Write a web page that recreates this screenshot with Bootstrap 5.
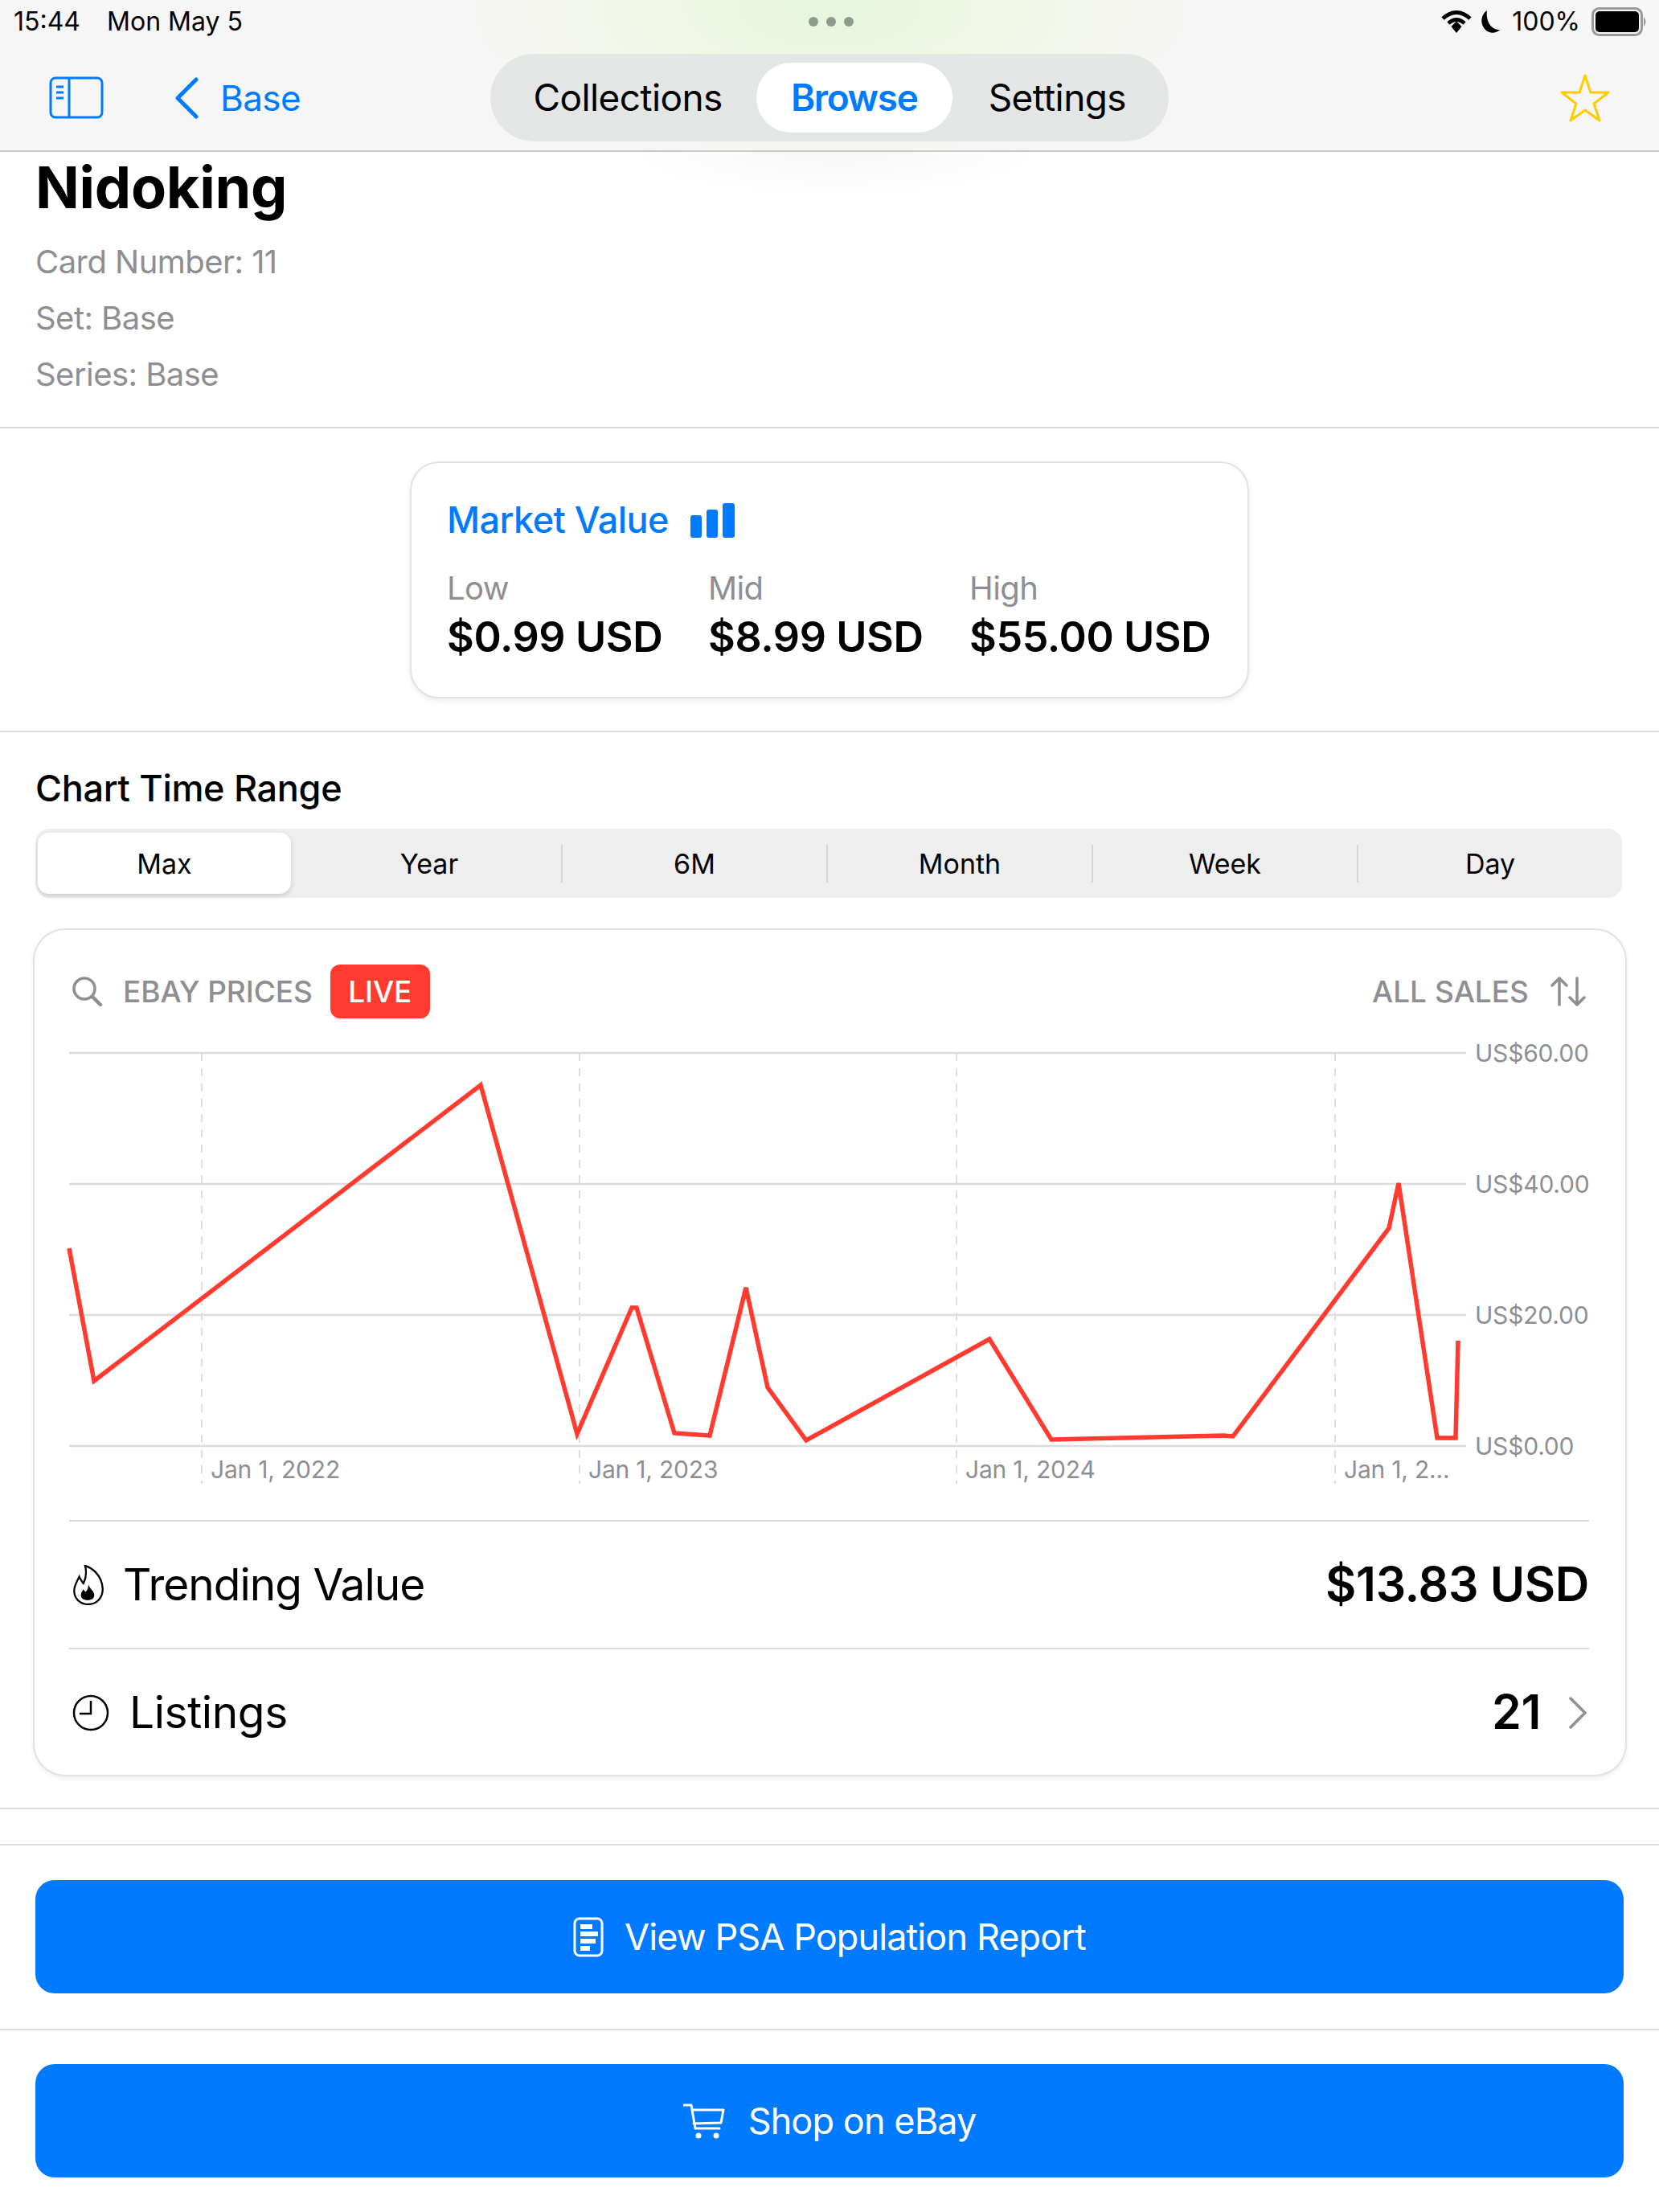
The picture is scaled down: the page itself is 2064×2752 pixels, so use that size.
<!DOCTYPE html>
<html lang="en">
<head>
  <meta charset="UTF-8">
  <title>Nidoking</title>
  <link href="https://cdn.jsdelivr.net/npm/bootstrap@5.3.0/dist/css/bootstrap.min.css" rel="stylesheet">
  <style>
    body { font-family: Inter, "Liberation Sans", sans-serif; color: #000; background: #fff; width: 2064px; height: 2752px; overflow: hidden; }
    .hdr { height: 189px; background: #f6f6f6; border-bottom: 2px solid #c9c9c9; position: relative; }
    .hdr-glow { background: radial-gradient(ellipse 460px 190px at 1032px 10px, #e6f5dc 0%, #f2f7e8 50%, #f6f6f6 100%); }
    .under-glow { position: absolute; left: 760px; top: 189px; width: 560px; height: 60px; background: radial-gradient(ellipse 280px 60px at 50% 0, #f7f7f7, #fff); z-index: -1; }
    .status-row { height: 54px; padding: 0 14px 0 17px; font-size: 32px; line-height: 54px; }
    .status-left { gap: 33px; }
    .status-pct { margin-left: 14px; }
    .status-batt { margin-left: 14px; }
    .dots { gap: 10px; }
    .dots i { display: block; width: 12px; height: 12px; border-radius: 50%; background: #8f9a8b; }
    .nav-row { height: 133px; padding: 13px 62px 0 61px; }
    .nav-side { flex: 1 1 0; }
    .nav-inner { height: 109px; }
    .back-chev { margin-left: 88px; }
    .back-link { color: #007aff; font-size: 44px; letter-spacing: -.6px; text-decoration: none; margin-left: 27px; }
    .pill-bar { width: 844px; height: 109px; border-radius: 55px; background: #e4e5e5; padding: 0 29px 0 54px; font-size: 46px; letter-spacing: -.6px; }
    .pill-on { width: 244px; height: 87px; border-radius: 44px; background: #fff; color: #007aff; font-weight: 600; margin: 0 45px 0 42px; letter-spacing: -1.4px; }
    .star-icon { margin-right: -2px; }
    .info-block { height: 344px; border-bottom: 2px solid #dcdcdc; padding: 0 44px; }
    .info-title { font-size: 72px; font-weight: 700; line-height: 88px; margin: 0 0 14px; letter-spacing: -.3px; }
    .info-line { font-size: 40px; line-height: 70px; color: #8e8e93; letter-spacing: -.55px; }
    .market-block { height: 378px; border-bottom: 2px solid #dcdcdc; padding-top: 43px; }
    .market-card { width: 1040px; height: 291px; border-radius: 34px; background: #fff; box-shadow: 0 0 0 2px #e2e2e2, 0 3px 8px rgba(0,0,0,.12); padding: 46px 0 0 44px; }
    .market-title { color: #007aff; font-size: 45px; font-weight: 500; line-height: 50px; letter-spacing: -.55px; }
    .market-icon { margin-left: 27px; }
    .market-cols { margin-top: 35px; }
    .market-col { width: 325px; }
    .market-lbl { font-size: 40px; line-height: 50px; color: #8e8e93; letter-spacing: -.6px; }
    .market-val { font-size: 52px; font-weight: 600; line-height: 72px; letter-spacing: -.4px; }
    .chart-block { height: 1340px; border-bottom: 2px solid #dcdcdc; padding: 40px 42px 0 44px; }
    .range-title { font-size: 45px; font-weight: 500; line-height: 60px; margin: 0; letter-spacing: -.3px; }
    .seg-bar { height: 86px; margin-top: 20px; width: 1974px; border-radius: 18px; background: #eeeeef; padding: 5px 0 5px 3px; font-size: 34px; }
    .seg-cell { flex: 1 1 0; }
    .seg-cell.seg-on { flex: 0 0 315px; margin-right: 8px; background: #fff; border-radius: 14px; box-shadow: 0 3px 6px rgba(0,0,0,.14); }
    .seg-sep { width: 2px; height: 47px; background: #d5d5d6; }
    .chart-card { width: 1979px; height: 1051px; margin: 40px 0 0 -1px; border-radius: 38px; background: #fff; box-shadow: 0 0 0 2px #e2e2e2, 0 3px 8px rgba(0,0,0,.10); }
    .chart-head { height: 133px; padding: 43px 47px 0 47px; font-size: 37px; font-weight: 500; color: #8e8e93; }
    .head-side { height: 67px; }
    .head-text { margin-left: 25px; letter-spacing: -.1px; }
    .head-arrows { margin-left: 27px; }
    .live-tag { width: 124px; height: 67px; border-radius: 12px; background: #ff3b30; color: #fff; margin-left: 22px; letter-spacing: -.2px; }
    .chart-svg { display: block; }
    .chart-svg text { font-family: Inter, "Liberation Sans", sans-serif; font-size: 30px; fill: #8e8e93; letter-spacing: -.2px; }
    .stat-row { height: 159px; margin: 0 45px 0 43px; border-top: 2px solid #dcdcdc; font-size: 55px; letter-spacing: -1px; }
    .stat-row.first-row { margin-top: 31px; }
    .stat-val { font-weight: 600; font-size: 59px; letter-spacing: -.35px; }
    .stat-short { letter-spacing: -.4px; }
    .flame-icon { margin: 0 23px 0 4px; }
    .clock-icon { margin: 0 25px 0 4px; }
    .row-chev { margin: 0 2px 0 34px; }
    .action-block { height: 230px; border-bottom: 2px solid #dcdcdc; padding: 43px 44px 0; }
    .action-block.last-block { padding-top: 42px; border: 0; }
    .action-btn { width: 1976px; height: 141px; border-radius: 24px; background: #007aff; border: 0; color: #fff; font-size: 45px; letter-spacing: -.9px; }
    .action-btn:hover { background: #007aff; color: #fff; }
    .psa-icon { margin-right: 26px; }
    .cart-icon { margin-right: 29px; }
    .top-gap { height: 45px; border-bottom: 2px solid #dcdcdc; }
  </style>
</head>
<body>
  <div class="under-glow"></div>

  <header class="hdr hdr-glow">
    <div class="status-row d-flex align-items-center">
      <div class="nav-side status-left d-flex"><span>15:44</span><span>Mon May 5</span></div>
      <div class="dots d-flex align-items-center"><i></i><i></i><i></i></div>
      <div class="nav-side d-flex align-items-center justify-content-end">
        <svg width="38" height="30" viewBox="0 0 38 30" class="me-2">
          <path d="M2 11 Q19 -4 36 11" fill="none" stroke="#000" stroke-width="5"/>
          <path d="M9 17 Q19 8 29 17" fill="none" stroke="#000" stroke-width="5"/>
          <path d="M12.5 21 L19 14.5 L25.5 21 L19 29 Z" fill="#000"/>
        </svg>
        <svg width="28" height="30" viewBox="0 0 28 30">
          <path d="M11 1 C3 6 2 18 9 25 C14 30 22 30 27 25 C18 26 9 16 11 1Z" fill="#000"/>
        </svg>
        <span class="status-pct">100%</span>
        <svg class="status-batt" width="70" height="36" viewBox="0 0 70 36">
          <rect x="1.500" y="1.500" width="61" height="33" rx="8" fill="none" stroke="#9a9a9a" stroke-width="3"/>
          <rect x="5" y="5" width="54" height="26" rx="5" fill="#000"/>
          <path d="M65 12 Q70 18 65 24 Z" fill="#9a9a9a"/>
        </svg>
      </div>
    </div>

    <nav class="nav-row d-flex align-items-start">
      <div class="nav-side nav-inner d-flex align-items-center">
        <svg width="68" height="53" viewBox="0 0 68 53">
          <rect x="2" y="2" width="64" height="49" rx="6" fill="none" stroke="#007aff" stroke-width="3"/>
          <path d="M25 2 V51 M9 13 H18 M9 20 H18 M9 27 H18" fill="none" stroke="#007aff" stroke-width="3"/>
        </svg>
        <svg class="back-chev" width="30" height="52" viewBox="0 0 30 52">
          <path d="M27 3 L4 26 L27 49" fill="none" stroke="#007aff" stroke-width="5" stroke-linecap="round" stroke-linejoin="round"/>
        </svg>
        <a class="back-link" href="#">Base</a>
      </div>
      <div class="pill-bar d-flex align-items-center">
        <span>Collections</span>
        <span class="pill-on d-flex align-items-center justify-content-center">Browse</span>
        <span>Settings</span>
      </div>
      <div class="nav-side nav-inner d-flex justify-content-end align-items-center">
        <svg class="star-icon" width="64" height="62" viewBox="0 0 64 62">
          <path d="M32 3 L39 24 L61 24 L43 38 L50 59 L32 46 L14 59 L21 38 L3 24 L25 24 Z" fill="none" stroke="#ffcc00" stroke-width="3" stroke-linejoin="round"/>
        </svg>
      </div>
    </nav>
  </header>

  <section class="info-block">
    <h1 class="info-title">Nidoking</h1>
    <div class="info-line">Card Number: 11</div>
    <div class="info-line">Set: Base</div>
    <div class="info-line">Series: Base</div>
  </section>

  <section class="market-block">
    <div class="market-card mx-auto">
      <div class="market-title d-flex align-items-center">
        <span>Market Value</span>
        <svg class="market-icon" width="56" height="43" viewBox="0 0 56 43">
          <rect x="0" y="15" width="14" height="28" rx="3" fill="#007aff"/>
          <rect x="20" y="8" width="14" height="35" rx="3" fill="#007aff"/>
          <rect x="40" y="0" width="15" height="43" rx="3" fill="#007aff"/>
        </svg>
      </div>
      <div class="market-cols d-flex">
        <div class="market-col"><div class="market-lbl">Low</div><div class="market-val">$0.99 USD</div></div>
        <div class="market-col"><div class="market-lbl">Mid</div><div class="market-val">$8.99 USD</div></div>
        <div class="market-col"><div class="market-lbl">High</div><div class="market-val">$55.00 USD</div></div>
      </div>
    </div>
  </section>

  <section class="chart-block">
    <h2 class="range-title">Chart Time Range</h2>
    <div class="seg-bar d-flex align-items-center">
      <div class="seg-cell seg-on h-100 d-flex align-items-center justify-content-center">Max</div>
      <div class="seg-cell text-center">Year</div>
      <span class="seg-sep"></span>
      <div class="seg-cell text-center">6M</div>
      <span class="seg-sep"></span>
      <div class="seg-cell text-center">Month</div>
      <span class="seg-sep"></span>
      <div class="seg-cell text-center">Week</div>
      <span class="seg-sep"></span>
      <div class="seg-cell text-center">Day</div>
    </div>

    <div class="chart-card">
      <div class="chart-head d-flex align-items-start justify-content-between">
        <div class="head-side d-flex align-items-center">
          <svg width="38" height="37" viewBox="0 0 38 37">
            <circle cx="15" cy="15" r="13" fill="none" stroke="#8e8e93" stroke-width="3.500"/>
            <path d="M25 25 L35 35" stroke="#8e8e93" stroke-width="4.500" stroke-linecap="round"/>
          </svg>
          <span class="head-text">EBAY PRICES</span>
          <span class="live-tag d-flex align-items-center justify-content-center">LIVE</span>
        </div>
        <div class="head-side d-flex align-items-center">
          <span>ALL SALES</span>
          <svg class="head-arrows" width="46" height="37" viewBox="0 0 46 37">
            <path d="M11 35 V2 M2 11 L11 2 L20 11 M33 2 V35 M24 26 L33 35 L42 26" fill="none" stroke="#8e8e93" stroke-width="3.500" stroke-linecap="round" stroke-linejoin="round"/>
          </svg>
        </div>
      </div>

      <svg class="chart-svg" width="1979" height="570" viewBox="43 1290 1979 570">
        <g stroke="#dedede" stroke-width="2" stroke-dasharray="10 9">
          <path d="M251 1310 V1846 M721 1310 V1846 M1190 1310 V1846 M1661 1310 V1846"/>
        </g>
        <g stroke="#dcdcdc" stroke-width="2.500">
          <path d="M86 1310 H1824 M86 1473 H1824 M86 1636 H1824 M86 1799 H1824"/>
        </g>
        <polyline fill="none" stroke="#ff3b30" stroke-width="5.500" stroke-linejoin="miter"
          points="86,1553 117,1718 598,1350 718,1784 786,1627 792,1627 839,1783 883,1786 928,1602 955,1726 1003,1792 1231,1666 1308,1791 1522,1786 1534,1787 1728,1528 1740,1472 1788,1789 1811,1789 1814,1668"/>
        <text x="262" y="1839">Jan 1, 2022</text>
        <text x="732" y="1839">Jan 1, 2023</text>
        <text x="1201" y="1839">Jan 1, 2024</text>
        <text x="1672" y="1839">Jan 1, 2...</text>
        <text x="1835" y="1321">US$60.00</text>
        <text x="1835" y="1484">US$40.00</text>
        <text x="1835" y="1647">US$20.00</text>
        <text x="1835" y="1810">US$0.00</text>
      </svg>

      <div class="stat-row first-row d-flex align-items-center justify-content-between">
        <div class="d-flex align-items-center">
          <svg class="flame-icon" width="40" height="50" viewBox="0 0 36 48">
            <path d="M14 1 C22 3 34 12 35 28 C35.500 40 27 47 18 47 C9 47 1 41 1 31 C1 24 5 19 7 14 C9 18 10 20 12 22 C15 16 16 8 14 1Z" fill="none" stroke="#000" stroke-width="2.200"/>
            <path d="M18 23 C19 28 25 31 25 36 C25 40 22 42 17 42 C12 42 9 40 9 36 C9 33 11 31 12 29 C13 31 14 32 15 32 C17 30 18 27 18 23Z" fill="#000"/>
          </svg>
          <span>Trending Value</span>
        </div>
        <span class="stat-val">$13.83 USD</span>
      </div>
      <div class="stat-row d-flex align-items-center justify-content-between">
        <div class="d-flex align-items-center">
          <svg class="clock-icon" width="46" height="46" viewBox="0 0 46 46">
            <circle cx="23" cy="23" r="21" fill="none" stroke="#000" stroke-width="2.500"/>
            <path d="M23 8 V24 H9" fill="none" stroke="#000" stroke-width="2.500"/>
          </svg>
          <span class="stat-short">Listings</span>
        </div>
        <div class="d-flex align-items-center">
          <span class="stat-val">21</span>
          <svg class="row-chev" width="24" height="40" viewBox="0 0 24 40">
            <path d="M3 2 L21 20 L3 38" fill="none" stroke="#8e8e93" stroke-width="3.500" stroke-linecap="round" stroke-linejoin="round"/>
          </svg>
        </div>
      </div>
    </div>
  </section>

  <div class="top-gap"></div>

  <section class="action-block">
    <button class="action-btn btn d-flex align-items-center justify-content-center">
      <svg class="psa-icon" width="38" height="50" viewBox="0 0 38 50">
        <rect x="2" y="2" width="34" height="46" rx="6" fill="none" stroke="#fff" stroke-width="3"/>
        <path d="M9 9 H24 V15 H9 Z M9 18 H31 V24 H9 Z M9 27 H28 V33 H9 Z M9 36 H21 V42 H9 Z" fill="#fff"/>
      </svg>
      <span>View PSA Population Report</span>
    </button>
  </section>
  <section class="action-block last-block">
    <button class="action-btn btn d-flex align-items-center justify-content-center">
      <svg class="cart-icon" width="52" height="44" viewBox="0 0 52 44">
        <path d="M1 2 H10 L15 31 H45 M11 8 H50 L47 24 L13 25" fill="none" stroke="#fff" stroke-width="3" stroke-linecap="round" stroke-linejoin="round"/>
        <circle cx="19" cy="40" r="3.500" fill="#fff"/>
        <circle cx="41" cy="40" r="3.500" fill="#fff"/>
      </svg>
      <span>Shop on eBay</span>
    </button>
  </section>

  <script src="https://cdn.jsdelivr.net/npm/bootstrap@5.3.0/dist/js/bootstrap.bundle.min.js"></script>
</body>
</html>
